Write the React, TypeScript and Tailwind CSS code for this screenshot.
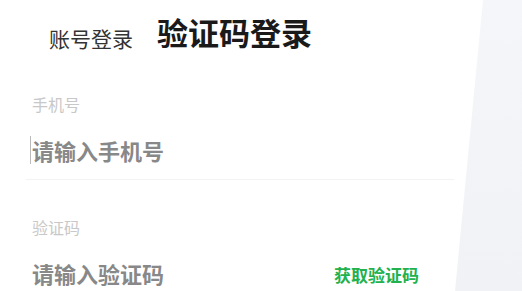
export default function App() {
  return (
    <main
      className="relative w-[522px] h-[291px] overflow-hidden bg-white"
      style={{ fontFamily: '"Noto Sans CJK SC", "Noto Sans", sans-serif' }}
    >
      {/* slanted panel on the right */}
      <div className="absolute inset-y-0 right-0 w-[67px] bg-gradient-to-b from-[#f5f6f9] to-[#f0f2f6] [clip-path:polygon(28px_0,100%_0,100%_100%,0_100%)]" />

      <div className="flex items-end gap-[24px] pl-[49px] pt-[12px] h-[52px]">
        <span className="text-[21px] leading-[28px] text-[#333]">账号登录</span>
        <span className="text-[31px] leading-[40px] font-bold text-[#1a1a1a]">验证码登录</span>
      </div>

      <div className="ml-[26px] w-[428px] mt-[41px]">
        <div className="px-[6px]">
          <p className="text-[16px] leading-[22px] text-[#c8c8c8]">手机号</p>
          <div className="flex items-center h-[30px] mt-[20px]">
            <span className="w-px h-[28px] bg-[#bbb] -ml-[2px] mr-[1px]" />
            <span className="text-[22px] leading-[30px] font-semibold text-[#888]">请输入手机号</span>
          </div>
        </div>
        <div className="h-px bg-[#f3f3f3] mt-[14px]" />

        <div className="px-[6px] mt-[36px]">
          <p className="text-[16px] leading-[22px] text-[#c8c8c8]">验证码</p>
          <div className="flex items-center justify-between h-[30px] mt-[20px]">
            <span className="text-[22px] leading-[30px] font-semibold text-[#888]">请输入验证码</span>
            <span className="text-[17px] leading-[24px] font-bold text-[#22b14c] mr-[29px] mt-[4px]">获取验证码</span>
          </div>
        </div>
      </div>
    </main>
  );
}
